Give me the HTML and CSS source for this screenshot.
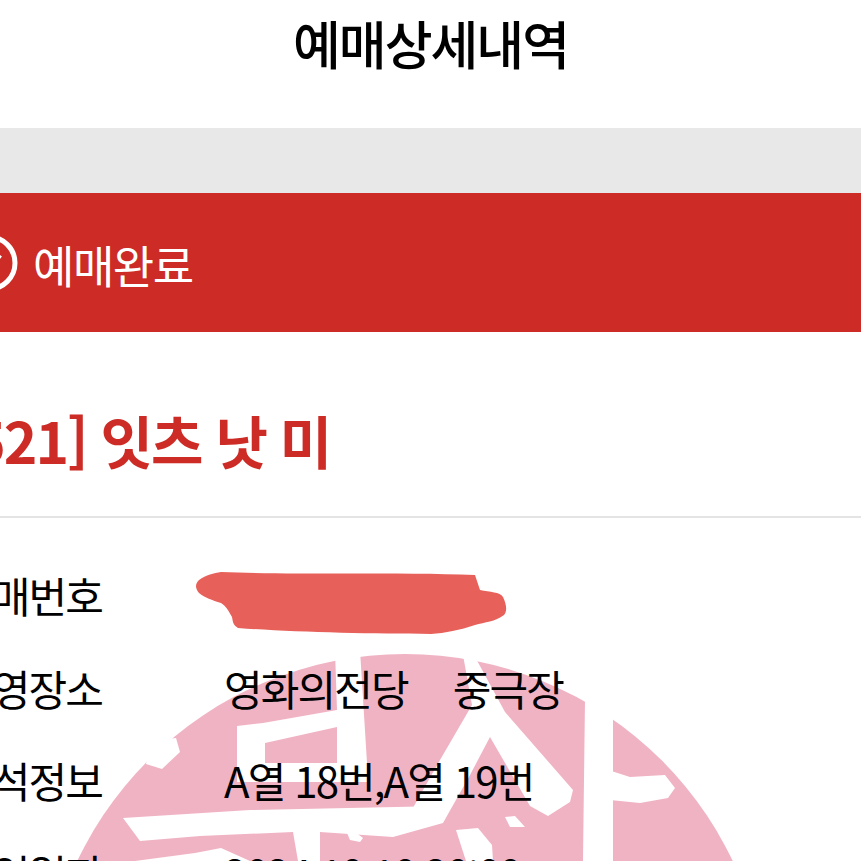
FILE: index.html
```html
<!DOCTYPE html>
<html lang="ko">
<head>
    <meta charset="UTF-8">
    <meta name="viewport" content="width=device-width, initial-scale=1.0">
    <title>예매상세내역</title>
    <link rel="stylesheet" href="styles.css">
</head>
<body>
    <div class="page">
        <svg class="stamp" viewBox="0 0 861 861" aria-hidden="true">
            <circle class="stamp-disc" cx="405" cy="1017" r="363"/>
            <g class="stamp-cut">
                <!-- notch in the rim -->
                <path d="M150 741L176 738L180 752L162 769L146 764Z"/>
                <!-- left character -->
                <path d="M237 726L263 723L337 710L335 650L360 650L367 763L367 782L237 782Z"/>
                <path d="M123 818L250 810L443 806L443 823L393 837L320 832L320 861L298 861L293 832L200 836L140 841Z"/>
                <path d="M135 861L195 853L221 848L250 861Z"/>
                <!-- right character -->
                <path d="M463 655L474 655L505 712L573 790L570 802L548 816L530 806L490 737L470 775L443 823L405 822L440 760L472 705Z"/>
                <path d="M456 830L478 828L492 845L493 861H466Z"/>
                <path d="M505 817L515 816L525 827L510 827Z"/>
                <path d="M347 833L355 832L363 838L360 842L350 840Z"/>
                <path d="M585 700L613 700L613 861H583Z"/>
                <path d="M602 768L630 777L665 775L675 788L668 798L640 803L610 800Z"/>
            </g>
            <path class="stamp-disc" d="M265 743L337 727L337 763L265 763Z"/>
            <path class="scribble" d="M221 572C290 575 400 572 475 575L480 590C490 592 500 592 503 597C507 605 507 612 504 615C495 622 485 622 475 625C460 630 445 633 431 634C370 634 290 632 238 628C233 625 233 622 232 617C228 610 226 606 221 603C212 600 205 598 199 593C195 588 195 584 199 580C206 575 214 573 221 572Z"/>
        </svg>

        <header class="top-bar">예매상세내역</header>
        <div class="gray-band"></div>
        <div class="status-bar">
            <svg class="status-icon" viewBox="0 0 60 60" aria-hidden="true">
                <circle cx="30" cy="30" r="26"/>
                <path d="M19 31L27 39L41 22"/>
            </svg>
            <span class="status-text">예매완료</span>
        </div>
        <h2 class="movie-title">[5521] 잇츠 낫 미</h2>
        <div class="info-list">
            <div class="info-row"><span class="info-label">예매번호</span><span class="info-value"></span></div>
            <div class="info-row"><span class="info-label">상영장소</span><span class="info-value">영화의전당<span class="hall">중극장</span></span></div>
            <div class="info-row"><span class="info-label">좌석정보</span><span class="info-value">A열 18번,A열 19번</span></div>
            <div class="info-row"><span class="info-label">상영일자</span><span class="info-value">2024.10.10 20:00</span></div>
        </div>
    </div>
</body>
</html>
```
FILE: styles.css
```css
html, body {
    margin: 0;
    padding: 0;
    background-color: white;
}
.page {
    position: relative;
    height: 861px;
    overflow: hidden;
    font-family: "Noto Sans CJK KR", "Noto Sans", sans-serif;
    color: #000;
}
.stamp {
    position: absolute;
    top: 0;
    left: 0;
    width: 861px;
    height: 861px;
}
.stamp-disc {
    fill: #f0b3c4;
}
.stamp-cut path {
    fill: white;
}
.scribble {
    fill: #e8605a;
}
.top-bar {
    position: relative;
    height: 128px;
    padding-top: 11px;
    box-sizing: border-box;
    text-align: center;
    font-size: 52px;
    line-height: 64px;
    font-weight: 500;
    letter-spacing: -2px;
}
.gray-band {
    position: relative;
    height: 65px;
    background-color: #e9e8e9;
}
.status-bar {
    position: relative;
    display: flex;
    align-items: center;
    gap: 14px;
    width: 902px;
    height: 139px;
    margin-left: -41px;
    background-color: #cd2b26;
    color: white;
    font-size: 45px;
    letter-spacing: -1.5px;
}
.status-text {
    padding-top: 4px;
}
.status-icon {
    width: 60px;
    height: 60px;
    fill: none;
    stroke: white;
    stroke-width: 5;
}
.movie-title {
    position: relative;
    margin: 0 0 0 -79px;
    height: 186px;
    padding-top: 69px;
    box-sizing: border-box;
    border-bottom: 2px solid #e4e4e4;
    font-size: 57px;
    line-height: 76px;
    font-weight: 700;
    letter-spacing: -2px;
    color: #cd2b26;
    white-space: nowrap;
}
.info-list {
    position: relative;
    margin-left: -45px;
    padding-top: 47px;
    display: flex;
    flex-direction: column;
    gap: 32.5px;
}
.info-row {
    display: flex;
    height: 60px;
    font-size: 42px;
    line-height: 60px;
    letter-spacing: -1.9px;
    white-space: nowrap;
}
.info-label {
    width: 269px;
}
.hall {
    margin-left: 45px;
}
```
